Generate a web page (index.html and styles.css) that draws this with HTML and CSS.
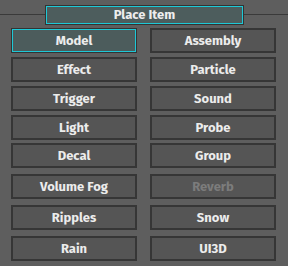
FILE: index.html
```html
<!DOCTYPE html>
<html>
 <head>
	<title>place item</title>
	<meta charset="UTF-8"/>
	<link rel="stylesheet" href="styles.css">
 </head>
 <body>
	<div id="panel">
	<div class="head">
		<div class="title">Place Item</div>
	</div>

	<div class="row">
		<button class="sel">Model</button>
		<button>Assembly</button>
	</div>
	<div class="row">
		<button>Effect</button>
		<button>Particle</button>
	</div>
	<div class="row">
		<button>Trigger</button>
		<button>Sound</button>
	</div>
	<div class="row">
		<button>Light</button>
		<button>Probe</button>
	</div>
	<div class="row tight">
		<button>Decal</button>
		<button>Group</button>
	</div>
	<div class="row wide">
		<button>Volume Fog</button>
		<button class="off">Reverb</button>
	</div>
	<div class="row wide">
		<button>Ripples</button>
		<button>Snow</button>
	</div>
	<div class="row wide">
		<button>Rain</button>
		<button>UI3D</button>
	</div>
	</div>
 </body>
</html>
```

FILE: styles.css
```css
body{
  margin: 0;
  background: #5e5e5e;
  font-family: "Fira Sans", "Noto Sans", sans-serif;
}
#panel{
  width: 288px;
  height: 266px;
  padding: 5px 0 0 11px;
  box-sizing: border-box;
}
.head{
  position: relative;
  height: 20px;
  margin-left: -11px;
  display: flex;
  justify-content: center;
}
.head::before{
  content: "";
  position: absolute;
  left: 0;
  right: 0;
  top: 9px;
  height: 1px;
  background: #3a3a3a;
}
.title{
  position: relative;
  width: 199px;
  height: 20px;
  margin-left: 1px;
  box-sizing: border-box;
  background: #4d5d5d;
  border: 1px solid #333;
  box-shadow: inset 0 0 0 1px #1ec8d6;
  color: #eee;
  font-weight: bold;
  font-size: 13px;
  line-height: 18px;
  text-align: center;
}
.row{
  display: grid;
  grid-template-columns: 126px 126px;
  column-gap: 13px;
  margin-top: 4px;
}
.row.tight{ margin-top: 3px; }
.row.wide{ margin-top: 6px; }
.head + .row{ margin-top: 3px; }
button{
  height: 25px;
  padding: 0;
  background: #555;
  border: 2px solid #363636;
  border-radius: 0;
  color: #ececec;
  font-family: inherit;
  font-weight: bold;
  font-size: 13px;
}
button.sel{
  background: #4c5c5c;
  border: 1px solid #333;
  box-shadow: inset 0 0 0 1px #1ec8d6;
}
button.off{
  color: #7c7c7c;
}
```
